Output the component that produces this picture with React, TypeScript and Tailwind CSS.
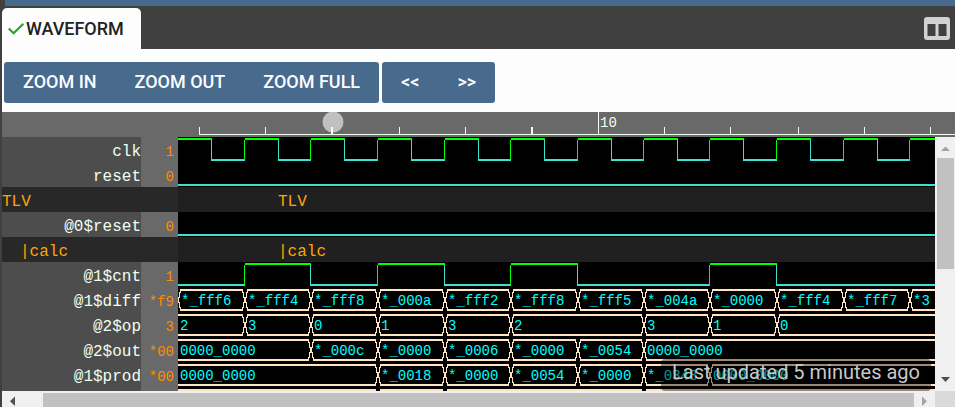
import React from "react";

const EDGES = [178, 245, 311, 378, 445, 511, 578, 644, 710, 777, 844, 910].map((x) => x - 178);
const FAR = 4000;
const at = (i: number) => (i < EDGES.length ? EDGES[i] : FAR);

const HIGH = "#00ff00";
const LOW = "#40e0d0";
const BUS = "#ffe4c4";

type Segment = [start: number, end: number, text: string];

type Row =
  | { kind: "clock"; name: string; value: string }
  | { kind: "bit"; name: string; value: string; highs: [number, number][] }
  | { kind: "scope"; name: string; indent: string }
  | { kind: "bus"; name: string; value: string; cut?: boolean; segments: Segment[] };

const ROWS: Row[] = [
  { kind: "clock", name: "clk", value: "1" },
  { kind: "bit", name: "reset", value: "0", highs: [] },
  { kind: "scope", name: "TLV", indent: "pl-0" },
  { kind: "bit", name: "@0$reset", value: "0", highs: [] },
  { kind: "scope", name: "|calc", indent: "pl-[18px]" },
  { kind: "bit", name: "@1$cnt", value: "1", highs: [[1, 2], [3, 4], [5, 6], [8, 9]] },
  {
    kind: "bus", name: "@1$diff", value: "*f9", cut: true,
    segments: [
      [0, 1, "*_fff6"], [1, 2, "*_fff4"], [2, 3, "*_fff8"], [3, 4, "*_000a"], [4, 5, "*_fff2"], [5, 6, "*_fff8"],
      [6, 7, "*_fff5"], [7, 8, "*_004a"], [8, 9, "*_0000"], [9, 10, "*_fff4"], [10, 11, "*_fff7"], [11, 12, "*3"],
    ],
  },
  {
    kind: "bus", name: "@2$op", value: "3",
    segments: [[0, 1, "2"], [1, 2, "3"], [2, 3, "0"], [3, 4, "1"], [4, 5, "3"], [5, 7, "2"], [7, 8, "3"], [8, 9, "1"], [9, 12, "0"]],
  },
  {
    kind: "bus", name: "@2$out", value: "*00",
    segments: [[0, 2, "0000_0000"], [2, 3, "*_000c"], [3, 4, "*_0000"], [4, 5, "*_0006"], [5, 6, "*_0000"], [6, 7, "*_0054"], [7, 12, "0000_0000"]],
  },
  {
    kind: "bus", name: "@1$prod", value: "*00",
    segments: [[0, 3, "0000_0000"], [3, 4, "*_0018"], [4, 5, "*_0000"], [5, 6, "*_0054"], [6, 7, "*_0000"], [7, 8, "*_0348"], [8, 12, "0000_0000"]],
  },
  { kind: "bus", name: "", value: "", segments: [[0, 3, ""], [3, 4, ""], [4, 7, ""], [7, 12, ""]] },
];

function Level({ x1, x2, high }: { x1: number; x2: number; high: boolean }) {
  return <rect x={x1} y={high ? 1 : 22} width={x2 - x1} height="2" fill={high ? HIGH : LOW} />;
}

function Edge({ x, rising }: { x: number; rising: boolean }) {
  return <rect x={x - 1} y="3" width="1" height="20" fill={rising ? HIGH : LOW} />;
}

function ClockWave() {
  return (
    <>
      {EDGES.map((x, i) => (
        <g key={x}>
          <Level x1={x} x2={x + 34} high />
          <Level x1={x + 33} x2={i < 11 ? at(i + 1) : x + 67} high={false} />
          {i > 0 && <Edge x={x} rising />}
          <Edge x={x + 34} rising={false} />
        </g>
      ))}
    </>
  );
}

function BitWave({ highs }: { highs: [number, number][] }) {
  let from = 0;
  const parts: React.ReactNode[] = [];
  highs.forEach(([a, b]) => {
    parts.push(
      <g key={a}>
        <Level x1={from} x2={at(a)} high={false} />
        <Level x1={at(a)} x2={at(b)} high />
        <Edge x={at(a)} rising />
        <Edge x={at(b)} rising={false} />
      </g>,
    );
    from = at(b) - 1;
  });
  return (
    <>
      {parts}
      <Level x1={from} x2={FAR} high={false} />
    </>
  );
}

function BusWave({ segments, cut }: { segments: Segment[]; cut?: boolean }) {
  return (
    <>
      {segments.map(([a, b, text], i) => {
        const l = at(a);
        const r = b > 11 ? FAR : at(b);
        const open = i === 0 && !cut;
        const x1 = open ? l : l + 2;
        return (
          <g key={a} shapeRendering="crispEdges">
            <rect x={x1} y="2" width={r - 2 - x1} height="2" fill={BUS} />
            <rect x={x1} y="22" width={r - 2 - x1} height="2" fill={BUS} />
            {!open && <path d={`M${l + 2.5} 3v2l-1 1v4l-1 1v4l1 1v4l1 1v2`} fill="none" stroke={BUS} />}
            {b < 12 && <path d={`M${r - 2.5} 3v2l1 1v4l1 1v4l-1 1v4l-1 1v2`} fill="none" stroke={BUS} />}
            <text x={open ? l + 2 : l + 3} y="18" fill="#00ffff" className="text-[14px]">{text}</text>
          </g>
        );
      })}
    </>
  );
}

function SignalRow({ row }: { row: Row }) {
  if (row.kind === "scope") {
    return (
      <div className="grid h-[25px] shrink-0 grid-cols-[176px_1fr] text-base leading-[30px] text-[#ffa500]">
        <div className={`bg-[#282828] ${row.indent}`}>{row.name}</div>
        <div className="bg-[#202020] pl-[100px]">{row.name}</div>
      </div>
    );
  }
  return (
    <div className="grid h-[25px] shrink-0 grid-cols-[139px_37px_1fr]">
      <div className="bg-[#4d4d4d] text-right text-base leading-[30px] text-[#f0fff0]">{row.name}</div>
      <div className="bg-[#696969] pr-1 text-right text-[14px] leading-[30px] text-[#ff8c00]">{row.value}</div>
      <svg className="block h-[25px] w-full bg-black">
        {row.kind === "clock" && <ClockWave />}
        {row.kind === "bit" && <BitWave highs={row.highs} />}
        {row.kind === "bus" && <BusWave segments={row.segments} cut={row.cut} />}
      </svg>
    </div>
  );
}

const TICKS = [199, 265, 331, 399, 465, 531, 598, 664, 730, 798, 864, 930].map((x) => x - 2);

function Ruler() {
  return (
    <svg className="block h-[25px] w-full shrink-0 bg-[#696969]">
      <circle cx="331" cy="10" r="10.5" fill="#c0c0c0" />
      <rect x="197" y="22" width="100%" height="1" fill="#f0fff0" />
      {TICKS.map((x, i) => (
        <rect key={x} x={x} y={i === 6 ? 0 : 15} width={i === 2 || i === 5 ? 2 : 1} height={i === 6 ? 22 : 7} fill="#f0fff0" />
      ))}
      <text x="598" y="15" fill="#f0fff0" className="text-[14px]">10</text>
    </svg>
  );
}

const button = "h-full px-[19px] pb-0.5 text-lg font-medium";

export default function App() {
  return (
    <div className="flex h-screen flex-col overflow-hidden bg-[#404040] pl-0.5 font-['Roboto',sans-serif]">
      <div className="ml-[3px] h-1.5 shrink-0 bg-[#476a8d]" />
      <header className="flex h-[43px] shrink-0 items-end justify-between">
        <button className="flex h-[41px] w-[139px] items-center rounded-t-[5px] bg-[#fdfdfd] pl-1.5 text-lg font-medium text-[#222]">
          <svg className="mr-0.5 h-4 w-4 shrink-0" viewBox="0 0 16 16" fill="none" stroke="#21ab2c" strokeWidth="2.2">
            <path d="M0.8 7.5 5.6 12.3 15.4 2.8" />
          </svg>
          WAVEFORM
        </button>
        <button aria-label="Split view" className="mr-[5px] mb-2 h-6 w-[26px]">
          <svg viewBox="0 0 26 24" className="h-6 w-[26px]">
            <path fill="#d2d2d2" fillRule="evenodd" d="M3 0H23Q26 0 26 3V20Q26 23 23 23H3Q0 23 0 20V3Q0 0 3 0ZM3.5 7V19H11.5V7ZM14.5 7V19H22.5V7Z" />
          </svg>
        </button>
      </header>

      <div className="flex h-[63px] shrink-0 items-start gap-[3px] bg-[#fdfdfd] pt-[13px] pl-0.5 text-[#fdfdfd]">
        <div className="flex h-[41px] rounded-[3px] bg-[#476a8d]">
          <button className={button}>ZOOM IN</button>
          <button className={button}>ZOOM OUT</button>
          <button className={button}>ZOOM FULL</button>
        </div>
        <div className="flex h-[41px] rounded-[3px] bg-[#476a8d]">
          <button className={button}>&lt;&lt;</button>
          <button className={button}>&gt;&gt;</button>
        </div>
      </div>

      <div className="relative flex min-h-0 flex-1 flex-col font-['Liberation_Mono',monospace]">
        <Ruler />
        <div className="flex min-h-0 flex-1">
          <main className="flex min-w-0 flex-1 flex-col overflow-hidden">
            {ROWS.map((row) => <SignalRow key={row.name} row={row} />)}
          </main>
          <div className="flex w-5 shrink-0 flex-col items-center bg-[#f0f0f0]">
            <svg className="h-[21px] w-5 shrink-0"><path d="M6 14 10.5 9.5 15 14Z" fill="#a3a3a3" /></svg>
            <div className="h-[111px] w-[17px] bg-[#c1c1c1]" />
            <svg className="mt-auto mb-1 h-4 w-5 shrink-0"><path d="M6 6 10.5 11 15 6Z" fill="#505050" /></svg>
          </div>
        </div>
        <div className="flex h-4 shrink-0 bg-[#f0f0f0]">
          <svg className="h-4 w-[41px] shrink-0"><path d="M13 5.5V15L8 10.2Z" fill="#505050" /></svg>
          <div className="mt-0.5 flex-1 bg-[#c1c1c1]" />
          <svg className="h-4 w-[21px] shrink-0"><path d="M8 5.5V15L13 10.2Z" fill="#a3a3a3" /></svg>
          <div className="w-5 bg-[#dadada]" />
        </div>
        <div className="absolute right-6 bottom-4 h-8 rounded bg-black/40 px-[11px] font-['Roboto',sans-serif] text-[20px] leading-[26px] text-[#c8c8c8]">
          Last updated 5 minutes ago
        </div>
      </div>
    </div>
  );
}
